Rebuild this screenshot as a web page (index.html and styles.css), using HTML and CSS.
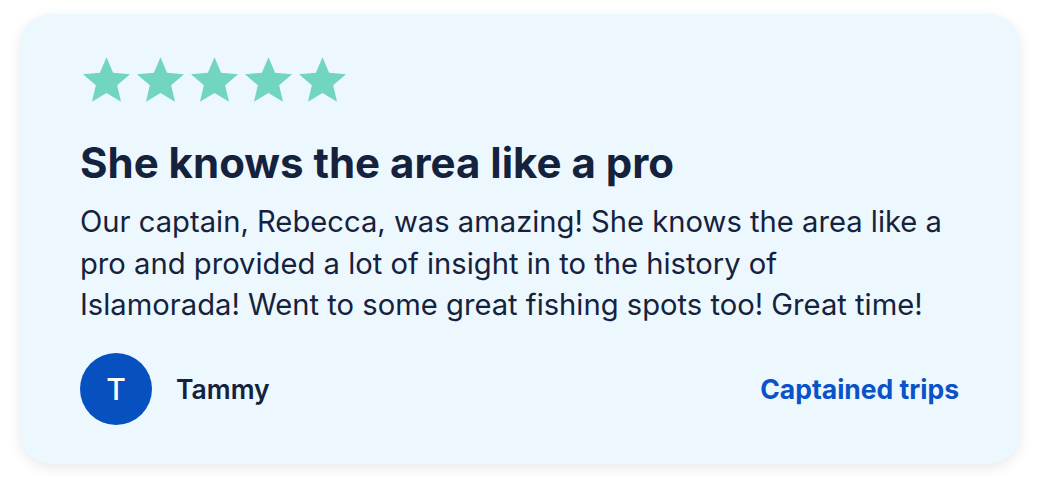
FILE: index.html
```html
<!DOCTYPE html>
<html lang="en">
<head>
<meta charset="utf-8">
<link rel="stylesheet" href="styles.css">
</head>
<body>
<div class="page">
  <article class="card">
    <div class="stars">
      <svg class="star" viewBox="2 2 20 19"><path d="M12 17.27L18.18 21l-1.64-7.03L22 9.24l-7.19-.61L12 2 9.19 8.63 2 9.24l5.46 4.73L5.82 21z"/></svg>
      <svg class="star" viewBox="2 2 20 19"><path d="M12 17.27L18.18 21l-1.64-7.03L22 9.24l-7.19-.61L12 2 9.19 8.63 2 9.24l5.46 4.73L5.82 21z"/></svg>
      <svg class="star" viewBox="2 2 20 19"><path d="M12 17.27L18.18 21l-1.64-7.03L22 9.24l-7.19-.61L12 2 9.19 8.63 2 9.24l5.46 4.73L5.82 21z"/></svg>
      <svg class="star" viewBox="2 2 20 19"><path d="M12 17.27L18.18 21l-1.64-7.03L22 9.24l-7.19-.61L12 2 9.19 8.63 2 9.24l5.46 4.73L5.82 21z"/></svg>
      <svg class="star" viewBox="2 2 20 19"><path d="M12 17.27L18.18 21l-1.64-7.03L22 9.24l-7.19-.61L12 2 9.19 8.63 2 9.24l5.46 4.73L5.82 21z"/></svg>
    </div>
    <h2 class="title">She knows the area like a pro</h2>
    <p class="text">Our captain, Rebecca, was amazing! She knows the area like a pro and provided a lot of insight in to the history of<br>Islamorada! Went to some great fishing spots too! Great time!</p>
    <div class="footer">
      <div class="author">
        <div class="avatar">T</div>
        <span class="name">Tammy</span>
      </div>
      <a class="link" href="#">Captained trips</a>
    </div>
  </article>
</div>
</body>
</html>
```
FILE: styles.css
```css
html, body {
  margin: 0;
  padding: 0;
  background: #ffffff;
}
body {
  font-family: "Inter", "Noto Sans", sans-serif;
  color: #15223d;
}
.page {
  padding: 14px 20px 24px;
}
.card {
  box-sizing: border-box;
  width: 1000px;
  height: 450px;
  border-radius: 32px;
  background: #edf7fe;
  box-shadow: 0 4px 14px rgba(0, 0, 0, 0.09);
  padding: 43px 60px 0;
}
.stars {
  display: flex;
  gap: 7px;
  margin-left: 3px;
  height: 46px;
}
.star {
  width: 47px;
  height: 45px;
  fill: #72d5bd;
}
.title {
  margin: 38px 0 0;
  font-size: 42px;
  line-height: 44px;
  font-weight: 700;
  color: #15223d;
  letter-spacing: 0;
}
.text {
  margin: 16px 0 0;
  max-width: 870px;
  font-size: 29.2px;
  line-height: 41.5px;
  font-weight: 400;
  color: #15223d;
}
.footer {
  margin-top: 27px;
  display: flex;
  align-items: center;
  justify-content: space-between;
  padding-right: 1px;
}
.author {
  display: flex;
  align-items: center;
  gap: 24px;
}
.avatar {
  width: 72px;
  height: 72px;
  border-radius: 50%;
  background: #0650c0;
  color: #ffffff;
  display: flex;
  align-items: center;
  justify-content: center;
  font-size: 30px;
  font-weight: 500;
}
.name {
  font-size: 26.5px;
  font-weight: 600;
  color: #15223d;
}
.link {
  font-size: 26.5px;
  font-weight: 700;
  color: #0a52c8;
  text-decoration: none;
}
```
